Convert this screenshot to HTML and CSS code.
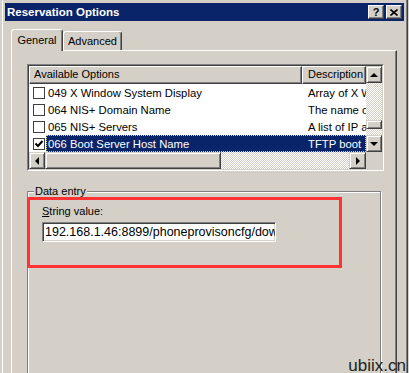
FILE: index.html
```html
<!DOCTYPE html>
<html lang="en">
<head>
    <meta charset="UTF-8">
    <meta name="viewport" content="width=device-width, initial-scale=1.0">
    <title>Reservation Options</title>
    <link rel="stylesheet" href="styles.css">
</head>
<body>
    <div class="window">
        <div class="titlebar">
            <span class="title">Reservation Options</span>
            <div class="title-buttons">
                <span class="cap-btn">?</span>
                <span class="cap-btn">
                    <svg width="8" height="7" viewBox="0 0 8 7"><path d="M0.5 0.5 L7.5 6.5 M7.5 0.5 L0.5 6.5" stroke="#000" stroke-width="1.6" fill="none"/></svg>
                </span>
            </div>
        </div>

        <div class="content">
            <div class="tabs">
                <div class="tab active">General</div>
                <div class="tab tab-advanced">Advanced</div>
            </div>

            <div class="panel">
                <!-- liste des options -->
                <div class="listview">
                    <div class="list-inner">
                        <div class="list-main">
                            <div class="list-header">
                                <div class="col-head col-name">Available Options</div>
                                <div class="col-head col-desc">Description</div>
                            </div>
                            <div class="row">
                                <span class="check"></span>
                                <div class="row-body">
                                    <span class="cell-name">049 X Window System Display</span>
                                    <span class="cell-desc">Array of X Window</span>
                                </div>
                            </div>
                            <div class="row">
                                <span class="check"></span>
                                <div class="row-body">
                                    <span class="cell-name">064 NIS+ Domain Name</span>
                                    <span class="cell-desc">The name of</span>
                                </div>
                            </div>
                            <div class="row">
                                <span class="check"></span>
                                <div class="row-body">
                                    <span class="cell-name">065 NIS+ Servers</span>
                                    <span class="cell-desc">A list of IP a</span>
                                </div>
                            </div>
                            <div class="row selected">
                                <span class="check">
                                    <svg width="10" height="10" viewBox="0 0 10 10"><path d="M1.5 4.5 L4 7 L8.5 2" stroke="#000" stroke-width="2" fill="none"/></svg>
                                </span>
                                <div class="row-body">
                                    <span class="cell-name">066 Boot Server Host Name</span>
                                    <span class="cell-desc">TFTP boot</span>
                                </div>
                            </div>
                        </div>

                        <div class="vscroll">
                            <div class="sb-btn"><span class="arrow-up"></span></div>
                            <div class="track"><div class="thumb thumb-v"></div></div>
                            <div class="sb-btn"><span class="arrow-down"></span></div>
                        </div>

                        <div class="hscroll">
                            <div class="sb-btn"><span class="arrow-left"></span></div>
                            <div class="thumb thumb-h"></div>
                            <div class="track"></div>
                            <div class="sb-btn sb-btn-wide"><span class="arrow-right"></span></div>
                        </div>
                        <div class="corner"></div>
                    </div>
                </div>

                <fieldset class="groupbox">
                    <legend>Data entry</legend>
                    <div class="field-label"><u>S</u>tring value:</div>
                    <div class="text-input">192.168.1.46:8899/phoneprovisoncfg/dow</div>
                </fieldset>
            </div>
        </div>

        <div class="highlight"></div>
        <div class="watermark">ubiix.cn</div>
    </div>
</body>
</html>
```

FILE: styles.css
```css
body {
    margin: 0;
    background-color: #d4d0c8;
    font-family: "Liberation Sans", Arial, sans-serif;
    font-size: 11px;
    color: #000;
}

.window {
    position: relative;
    width: 409px;
    height: 373px;
    overflow: hidden;
    box-sizing: border-box;
    padding: 3px 5px 0 5px;
    background-color: #d4d0c8;
    box-shadow: inset 2px 0 #d4d0c8, inset 3px 0 #fff,
                inset -1px 0 #d4d0c8, inset -2px 0 #404040, inset -3px 0 #808080;
}

/* barre de titre */
.titlebar {
    display: flex;
    align-items: center;
    justify-content: space-between;
    height: 18px;
    padding: 0 2px;
    background-color: #0a246a;
    color: #fff;
}

.title {
    font-weight: bold;
    font-size: 11.5px;
}

.title-buttons {
    display: flex;
    gap: 2px;
}

.cap-btn {
    display: flex;
    align-items: center;
    justify-content: center;
    width: 16px;
    height: 14px;
    box-sizing: border-box;
    background-color: #d4d0c8;
    border: 1px solid;
    border-color: #fff #404040 #404040 #fff;
    box-shadow: inset -1px -1px #808080;
    color: #000;
    font-weight: bold;
    font-size: 11px;
    line-height: 12px;
}

.content {
    padding: 8px 7px 0 6px;
}

/* onglets */
.tabs {
    display: flex;
    align-items: flex-end;
    height: 21px;
}

.tab {
    box-sizing: border-box;
    height: 19px;
    border: 1px solid;
    border-bottom: none;
    border-color: #fff #404040 transparent #fff;
    border-radius: 3px 3px 0 0;
    box-shadow: inset -1px 0 #808080;
    text-align: center;
    line-height: 18px;
    white-space: nowrap;
}

.tab.active {
    position: relative;
    z-index: 1;
    width: 52px;
    height: 22px;
    margin-bottom: -1px;
    background-color: #d4d0c8;
    line-height: 21px;
}

.tab-advanced {
    width: 59px;
}

.panel {
    height: 330px;
    border-top: 1px solid #fff;
    border-left: 1px solid #fff;
    border-right: 1px solid #404040;
    box-shadow: inset -1px 0 #808080;
    padding: 13px 0 0 15px;
}

/* liste */
.listview {
    width: 357px;
    box-sizing: border-box;
    border: 1px solid;
    border-color: #808080 #fff #fff #808080;
}

.list-inner {
    display: grid;
    grid-template-columns: 337px 16px;
    grid-template-rows: 86px 17px;
    border: 1px solid;
    border-color: #404040 #d4d0c8 #d4d0c8 #404040;
    background-color: #fff;
}

.list-main {
    overflow: hidden;
}

.list-header {
    display: flex;
    height: 18px;
}

.col-head {
    flex: none;
    box-sizing: border-box;
    height: 18px;
    background-color: #d4d0c8;
    border: 1px solid;
    border-color: #fff #404040 #404040 #fff;
    box-shadow: inset -1px -1px #808080;
    padding-left: 4px;
    line-height: 15px;
    white-space: nowrap;
    overflow: hidden;
}

.col-name {
    width: 273px;
}

.col-desc {
    width: 64px;
    padding-left: 5px;
}

.row {
    display: flex;
    align-items: center;
    height: 17px;
    font-size: 11.3px;
}

.check {
    flex: none;
    display: flex;
    align-items: center;
    justify-content: center;
    width: 12px;
    height: 12px;
    box-sizing: border-box;
    margin: 0 1px 0 4px;
    border: 1px solid #404040;
    background-color: #fff;
}

.row-body {
    flex: 1;
    display: flex;
    align-items: center;
    height: 17px;
    box-sizing: border-box;
    overflow: hidden;
    white-space: nowrap;
}

.row.selected .row-body {
    background-color: #0a246a;
    color: #fff;
    outline: 1px dotted #d8d890;
    outline-offset: -1px;
}

.cell-name {
    flex: none;
    width: 256px;
    box-sizing: border-box;
    padding-left: 2px;
    overflow: hidden;
}

.cell-desc {
    flex: none;
    padding-left: 6px;
}

/* barres de défilement */
.vscroll {
    display: flex;
    flex-direction: column;
}

.hscroll {
    display: flex;
}

.track {
    flex: 1;
    background: repeating-conic-gradient(#fff 0 25%, #d4d0c8 0 50%) 0 0 / 2px 2px;
}

.sb-btn,
.thumb {
    flex: none;
    box-sizing: border-box;
    background-color: #d4d0c8;
    border: 1px solid;
    border-color: #d4d0c8 #404040 #404040 #d4d0c8;
    box-shadow: inset 1px 1px #fff, inset -1px -1px #808080;
}

.sb-btn {
    display: flex;
    align-items: center;
    justify-content: center;
    width: 16px;
    height: 17px;
}

.sb-btn-wide {
    width: 17px;
}

.thumb-v {
    height: 9px;
    margin-top: 37px;
}

.thumb-h {
    width: 176px;
}

.arrow-up,
.arrow-down {
    width: 0;
    height: 0;
    border-left: 4px solid transparent;
    border-right: 4px solid transparent;
}

.arrow-up {
    border-bottom: 4px solid #000;
}

.arrow-down {
    border-top: 4px solid #000;
}

.arrow-left,
.arrow-right {
    width: 0;
    height: 0;
    border-top: 4px solid transparent;
    border-bottom: 4px solid transparent;
}

.arrow-left {
    border-right: 4px solid #000;
}

.arrow-right {
    border-left: 4px solid #000;
}

.corner {
    background-color: #d4d0c8;
}

/* cadre de saisie */
.groupbox {
    width: 354px;
    height: 200px;
    min-width: 0;
    box-sizing: border-box;
    margin: 14px 0 0 0;
    padding: 0 0 0 6px;
    border: 1px solid #808080;
    box-shadow: inset 1px 1px #fff, 1px 1px #fff;
}

.groupbox legend {
    padding: 0 1px;
    line-height: 13px;
    background-color: #d4d0c8;
}

.field-label {
    margin: 7px 0 0 8px;
    line-height: 13px;
}

.text-input {
    width: 234px;
    height: 20px;
    box-sizing: border-box;
    margin: 4px 0 0 8px;
    padding: 0 2px;
    background-color: #fff;
    border: 1px solid;
    border-color: #808080 #fff #fff #808080;
    box-shadow: inset 1px 1px #404040, inset -1px -1px #d4d0c8;
    font-size: 12.5px;
    line-height: 18px;
    white-space: nowrap;
    overflow: hidden;
}

/* annotation rouge */
.highlight {
    position: absolute;
    left: 27px;
    top: 197px;
    width: 315px;
    height: 71px;
    box-sizing: border-box;
    border: 3px solid #f33;
}

.watermark {
    position: absolute;
    top: 357px;
    right: 3px;
    font-size: 17px;
    line-height: 17px;
    color: #222;
}
```
